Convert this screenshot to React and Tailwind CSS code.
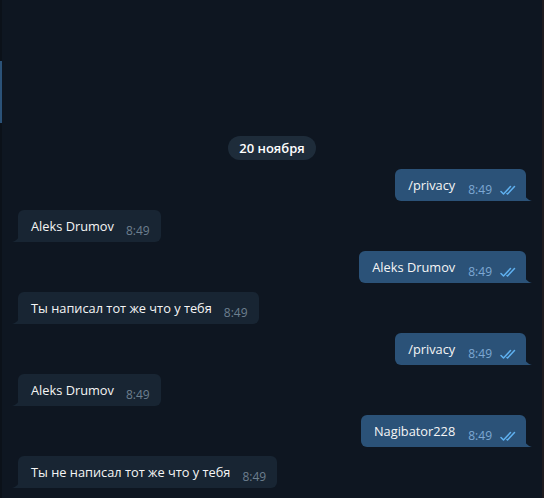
const messages = [
  { out: true, text: '/privacy', time: '8:49' },
  { out: false, text: 'Aleks Drumov', time: '8:49' },
  { out: true, text: 'Aleks Drumov', time: '8:49' },
  { out: false, text: 'Ты написал тот же что у тебя', time: '8:49' },
  { out: true, text: '/privacy', time: '8:49' },
  { out: false, text: 'Aleks Drumov', time: '8:49' },
  { out: true, text: 'Nagibator228', time: '8:49' },
  { out: false, text: 'Ты не написал тот же что у тебя', time: '8:49' },
]

function Ticks() {
  return (
    <svg width="18" height="10" viewBox="0 0 18 10" fill="none" className="shrink-0">
      <path d="M1 6.5 L3.5 9 L10.5 1.5" stroke="#5fb0ef" strokeWidth="1.5" strokeLinecap="round" strokeLinejoin="round" />
      <path d="M7 8.5 L7.5 9 L14.5 1.5" stroke="#5fb0ef" strokeWidth="1.5" strokeLinecap="round" strokeLinejoin="round" />
    </svg>
  )
}

function Bubble({ msg }) {
  if (msg.out) {
    return (
      <div className="flex justify-end pr-[16px]">
        <div className="relative h-[32px] bg-[#2b5278] rounded-[6px] rounded-br-none pl-[13px] pr-[8px] flex items-start">
          <span className="text-[12.8px] leading-[18px] pt-[7px] text-[#f5f5f5]">{msg.text}</span>
          <span className="text-[12px] leading-[16px] pt-[13px] ml-[13px] text-[#7da8d3]">{msg.time}</span>
          <span className="pt-[16px] ml-[8px]"><Ticks /></span>
          <svg className="absolute -right-[6px] bottom-0" width="7" height="8" viewBox="0 0 7 8">
            <path d="M0 0 C0 4 2 6.5 7 8 L0 8 Z" fill="#2b5278" />
          </svg>
        </div>
      </div>
    )
  }
  return (
    <div className="flex justify-start pl-[16px]">
      <div className="relative h-[32px] bg-[#182533] rounded-[6px] rounded-bl-none pl-[13px] pr-[11px] flex items-start">
        <span className="text-[12.8px] leading-[18px] pt-[7px] text-[#f5f5f5]">{msg.text}</span>
        <span className="text-[12px] leading-[16px] pt-[13px] ml-[12px] text-[#6d7f8f]">{msg.time}</span>
        <svg className="absolute -left-[6px] bottom-0" width="7" height="8" viewBox="0 0 7 8">
          <path d="M7 0 C7 4 5 6.5 0 8 L7 8 Z" fill="#182533" />
        </svg>
      </div>
    </div>
  )
}

export default function App() {
  return (
    <div className="w-[544px] h-[498px] flex bg-[#0e1621] overflow-hidden" style={{ fontFamily: '"Open Sans", "Noto Sans", sans-serif' }}>
      <div className="w-[2px] h-full bg-[#0b1119] flex flex-col">
        <div className="h-[61px]" />
        <div className="h-[62px] bg-[#2b5278]" />
      </div>
      <div className="flex-1 flex flex-col pt-[136px]">
        <div className="flex justify-center">
          <div className="h-[24px] px-[11px] rounded-full bg-[#1e2c3a] text-white text-[13px] font-semibold leading-[24px]">
            20 ноября
          </div>
        </div>
        <div className="flex flex-col gap-[9px] mt-[9px]">
          {messages.map((m, i) => (
            <Bubble key={i} msg={m} />
          ))}
        </div>
      </div>
      <div className="w-[2px] h-full bg-[#1f1b1e]" />
    </div>
  )
}
